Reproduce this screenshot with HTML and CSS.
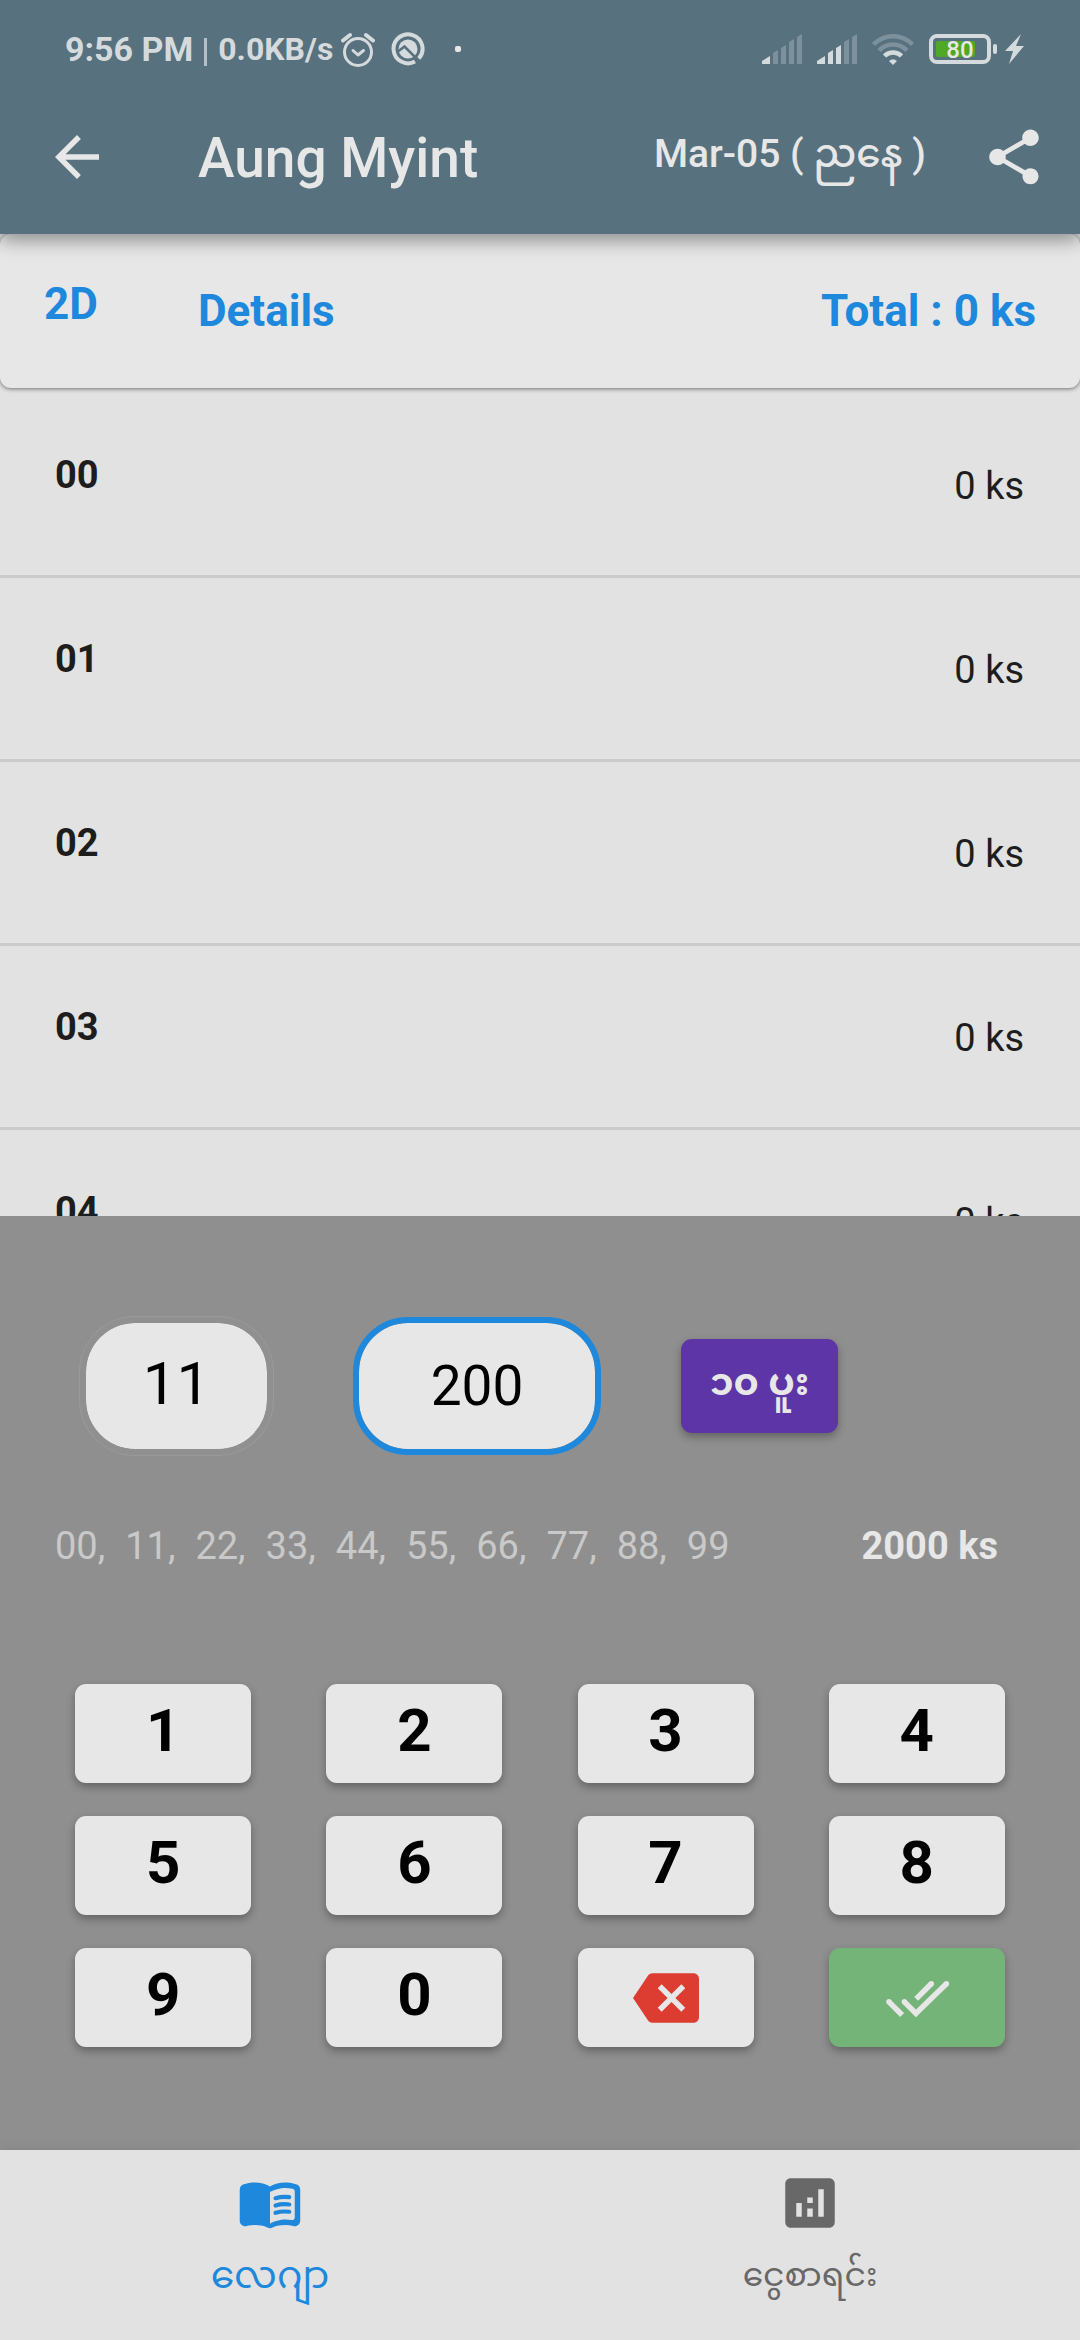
FILE: index.html
```html
<!DOCTYPE html>
<html lang="my">
<head>
  <meta charset="UTF-8">
  <meta name="viewport" content="width=device-width, initial-scale=1">
  <title>Aung Myint</title>
  <link rel="stylesheet" href="styles.css">
</head>
<body>

  <!-- app bar -->
  <header class="app-bar">
    <div class="status-bar">
      <span class="clock">9:56 PM</span>
      <span class="divider"></span>
      <span class="speed">0.0KB/s</span>
      <svg class="alarm" width="34" height="36" viewBox="0 0 34 36" fill="none" stroke="currentColor" stroke-width="3" stroke-linecap="round" stroke-linejoin="round">
        <circle cx="17" cy="21" r="13.500"/>
        <path stroke-width="4" d="M2 9.500L9 4M25 4L32 9.500"/>
        <path d="M12 19.500l5 4.500 5.500-4.500"/>
      </svg>
      <svg class="browser" width="34" height="34" viewBox="0 0 34 34">
        <path d="M24 29.500A14.500 14.500 0 1 1 27.800 26.500" fill="none" stroke="currentColor" stroke-width="4"/>
        <circle cx="17" cy="17" r="9.500" fill="currentColor"/>
        <path d="M7 19.500l6.500-5 13 13" fill="none" stroke="#57717e" stroke-width="2.500"/>
      </svg>
      <span class="dot"></span>

      <div class="status-icons">
        <svg width="40" height="30" viewBox="0 0 40 30" fill="currentColor">
          <path d="M0 30v-3l8-5v8z"/>
          <path opacity=".3" d="M11 30V19l5-3v14zM19 30V14l5-3v19zM27 30V8l5-3v25zM35 30V3l5-3v30z"/>
        </svg>
        <svg width="40" height="30" viewBox="0 0 40 30" fill="currentColor">
          <path d="M0 30v-3l8-5v8zM11 30V19l5-3v14zM19 30V14l5-3v19z"/>
          <path opacity=".3" d="M27 30V8l5-3v25zM35 30V3l5-3v30z"/>
        </svg>
        <svg class="wifi" width="42" height="32" viewBox="0 0 42 32" fill="none" stroke="currentColor" stroke-width="4.500">
          <path opacity=".3" d="M1.500 11.500a27 27 0 0 1 39 0M7 17.500a19.500 19.500 0 0 1 28 0"/>
          <path d="M12.500 23a12 12 0 0 1 17 0"/>
          <path d="M17 28q4-3.500 8 0l-4 4z" fill="currentColor" stroke="none"/>
        </svg>
        <svg class="battery" width="68" height="30" viewBox="0 0 68 30">
          <rect x="2" y="2" width="58" height="26" rx="6" fill="none" stroke="currentColor" stroke-width="4"/>
          <rect x="64" y="10" width="4" height="10" rx="2" fill="currentColor"/>
          <rect x="7" y="7" width="39" height="16" rx="2" fill="#4fa826"/>
          <text x="31" y="24" text-anchor="middle">80</text>
        </svg>
        <svg class="bolt" width="19" height="30" viewBox="0 0 19 30" fill="currentColor"><path d="M16 0L0 17h8L4 30l15-18h-8z"/></svg>
      </div>
    </div>

    <div class="toolbar">
      <button class="icon-button" type="button" aria-label="Back">
        <svg viewBox="0 0 24 24" fill="currentColor"><path d="M20 11H7.830l5.590-5.590L12 4l-8 8 8 8 1.410-1.410L7.830 13H20v-2z"/></svg>
      </button>
      <h1 class="title">Aung Myint</h1>
      <span class="date">Mar-05 ( ညနေ )</span>
      <button class="icon-button" type="button" aria-label="Share">
        <svg viewBox="0 0 24 24" fill="currentColor"><path d="M18 16.080c-.76 0-1.440.3-1.960.77L8.910 12.700c.05-.23.09-.46.09-.7s-.04-.47-.09-.7l7.050-4.110c.54.5 1.250.81 2.040.81 1.660 0 3-1.340 3-3s-1.340-3-3-3-3 1.340-3 3c0 .24.04.47.09.7L8.040 9.810C7.500 9.310 6.790 9 6 9c-1.660 0-3 1.340-3 3s1.340 3 3 3c.79 0 1.500-.31 2.040-.81l7.120 4.160c-.05.21-.08.43-.08.65 0 1.610 1.310 2.920 2.920 2.920s2.920-1.310 2.920-2.920-1.310-2.920-2.920-2.920z"/></svg>
      </button>
    </div>
  </header>

  <main class="content">
    <section class="summary">
      <span class="type">2D</span>
      <span class="details">Details</span>
      <span class="total">Total : 0 ks</span>
    </section>

    <ul class="number-list">
      <li><b>00</b><span>0 ks</span></li>
      <li><b>01</b><span>0 ks</span></li>
      <li><b>02</b><span>0 ks</span></li>
      <li><b>03</b><span>0 ks</span></li>
      <li><b>04</b><span>0 ks</span></li>
    </ul>
  </main>

  <!-- input panel -->
  <section class="panel">
    <div class="fields">
      <input class="field number" type="text" value="11" aria-label="Number">
      <input class="field amount" type="text" value="200" aria-label="Amount">
      <button class="group-button" type="button">၁၀ ပူး</button>
    </div>

    <div class="codes">
      <div class="code-list">
        <span>00,</span>
        <span>11,</span>
        <span>22,</span>
        <span>33,</span>
        <span>44,</span>
        <span>55,</span>
        <span>66,</span>
        <span>77,</span>
        <span>88,</span>
        <span>99</span>
      </div>
      <span class="code-total">2000 ks</span>
    </div>

    <div class="keypad">
      <button class="key" type="button">1</button>
      <button class="key" type="button">2</button>
      <button class="key" type="button">3</button>
      <button class="key" type="button">4</button>
      <button class="key" type="button">5</button>
      <button class="key" type="button">6</button>
      <button class="key" type="button">7</button>
      <button class="key" type="button">8</button>
      <button class="key" type="button">9</button>
      <button class="key" type="button">0</button>
      <button class="key delete" type="button" aria-label="Delete">
        <svg viewBox="0 0 24 24" fill="currentColor"><path d="M22 3H7c-.69 0-1.230.35-1.590.88L0 12l5.410 8.110c.36.53.9.89 1.590.89h15c1.100 0 2-.9 2-2V5c0-1.100-.9-2-2-2zm-3 12.590L17.590 17 14 13.410 10.410 17 9 15.590 12.590 12 9 8.410 10.410 7 14 10.590 17.590 7 19 8.410 15.410 12 19 15.590z"/></svg>
      </button>
      <button class="key done" type="button" aria-label="Done">
        <svg viewBox="0 0 24 24" fill="none" stroke="currentColor" stroke-width="2">
          <path stroke-linecap="round" d="M1.800 13.400l0 0M7.400 13.400l0 0M17.200 6.800l0 0M22.700 6.800l0 0"/>
          <path d="M1.800 13.400l4.800 4.800M17.200 6.800l-5.500 5.500M7.400 13.400l4.200 4.200L22.700 6.800"/>
        </svg>
      </button>
    </div>
  </section>

  <!-- bottom navigation -->
  <nav class="bottom-nav">
    <a class="nav-item active" href="#ledger">
      <svg viewBox="0 0 24 24" fill="currentColor">
        <path fill-rule="evenodd" d="M17.500 4.500c-1.950 0-4.050.4-5.500 1.500-1.450-1.100-3.550-1.500-5.500-1.500-1.450 0-2.990.22-4.280.79C1.490 5.620 1 6.330 1 7.140v11.280c0 1.300 1.220 2.260 2.480 1.940.98-.25 2.020-.36 3.020-.36 1.560 0 3.220.26 4.560.92.6.3 1.280.3 1.870 0 1.340-.67 3-.92 4.560-.92 1 0 2.040.11 3.020.36 1.260.33 2.480-.63 2.480-1.940V7.140c0-.81-.49-1.520-1.220-1.850-1.280-.57-2.820-.79-4.270-.79zM21 17.230c0 .63-.58 1.090-1.200.98-.75-.14-1.530-.2-2.300-.2-1.700 0-4.150.65-5.500 1.500V8c1.350-.85 3.800-1.500 5.500-1.500.92 0 1.830.09 2.700.28.46.1.8.51.8.98v9.470z"/>
        <path fill="none" stroke="currentColor" stroke-width="1.500" stroke-linecap="round" d="M14 10.260q2.400-.7 5-.4M14 12.920q2.400-.7 5-.4M14 15.580q2.400-.7 5-.4"/>
      </svg>
      <span>လေဂျာ</span>
    </a>
    <a class="nav-item" href="#accounts">
      <svg viewBox="0 0 24 24" fill="currentColor"><path d="M19 3H5c-1.100 0-2 .9-2 2v14c0 1.100.9 2 2 2h14c1.100 0 2-.9 2-2V5c0-1.100-.9-2-2-2zM9 17H7v-5h2v5zm4 0h-2v-3h2v3zm0-5h-2v-2h2v2zm4 5h-2V7h2v10z"/></svg>
      <span>ငွေစာရင်း</span>
    </a>
  </nav>

</body>
</html>
```
FILE: styles.css
```css
* {
  box-sizing: border-box;
}

body {
  margin: 0;
  height: 100vh;
  display: flex;
  flex-direction: column;
  font-family: Roboto, "Noto Sans Myanmar", "Noto Sans", sans-serif;
  font-size: 38px;
  line-height: 44px;
  background-color: #e2e2e2;
  color: #1d1d1d;
}

button, input {
  font-family: inherit;
  border: none;
  padding: 0;
  margin: 0;
}

svg {
  display: block;
  flex: none;
}

/* app bar */
.app-bar {
  position: relative; /* keeps the shadow above the card */
  z-index: 1;
  background-color: #57717e;
  color: #e7e7e7;
  box-shadow: 0 6px 18px rgba(0, 0, 0, 0.4);
}

.status-bar {
  display: flex;
  align-items: center;
  height: 80px;
  padding: 18px 56px 0 65px;
  font-size: 32px;
  font-weight: 700;
  color: #d5dadd;
}

.clock {
  font-size: 34px;
}

.divider {
  width: 3px;
  height: 28px;
  margin: 6px 11px 0;
  background-color: #b5c0c6;
}

.alarm {
  margin-left: 8px;
}

.browser {
  margin-left: 16px;
}

.dot {
  width: 6px;
  height: 6px;
  margin-left: 30px;
  border-radius: 2px;
  background-color: #e7e7e7;
}

.status-icons {
  display: flex;
  align-items: center;
  gap: 15px;
  margin-left: auto;
}

.battery text {
  font-size: 24px;
  font-weight: 500;
  fill: #e7e7e7;
}

.bolt {
  margin-left: -7px;
}

.toolbar {
  display: flex;
  align-items: center;
  height: 154px;
  padding: 0 33px 0 44px;
}

.icon-button {
  width: 66px;
  height: 66px;
  background: none;
  color: inherit;
}

.title {
  flex: 1;
  margin: 0 0 0 88px;
  padding-top: 2px;
  font-size: 55px;
  font-weight: 500;
}

.date {
  margin-right: 55px;
  padding-bottom: 6px;
  font-size: 39px;
  font-weight: 500;
}

/* list */
.content {
  flex: 1;
  min-height: 0;
  overflow: hidden;
}

.summary {
  display: flex;
  align-items: center;
  height: 154px;
  padding: 0 44px;
  border-radius: 11px;
  background-color: #e7e7e7;
  box-shadow: 0 1px 4px rgba(0, 0, 0, 0.5);
  color: #1e88dc;
  font-size: 44px;
  font-weight: 700;
}

.type {
  width: 154px;
  padding-bottom: 14px;
}

.total {
  margin-left: auto;
}

.number-list {
  list-style: none;
  margin: 0;
  padding: 6px 0 0;
}

.number-list li {
  display: flex;
  align-items: center;
  justify-content: space-between;
  height: 184px;
  padding: 2px 56px 0 55px;
  border-bottom: 3px solid #cbcbcb;
}

.number-list b {
  padding-bottom: 22px;
}

/* input panel */
.panel {
  padding: 101px 0 103px;
  background-color: #8f8f8f;
}

.fields {
  display: flex;
  align-items: center;
  gap: 80px;
  padding: 0 80px;
}

.field {
  height: 138px;
  border: 6px solid #909090;
  border-radius: 55px;
  background-color: #e7e7e7;
  background-clip: padding-box;
  color: #000;
  text-align: center;
  outline: none;
}

.number {
  width: 193px;
  padding-bottom: 6px;
  box-shadow: 0 0 0 1px #9a9a9a;
  font-size: 60px;
}

.amount {
  width: 248px;
  border-color: #1e88dc;
  font-size: 55px;
}

.group-button {
  width: 157px;
  height: 94px;
  border-radius: 11px;
  background-color: #5d35a6;
  box-shadow: 0 4px 8px rgba(0, 0, 0, 0.3);
  color: #e7e7e7;
  font-size: 38px;
  font-weight: 700;
}

.codes {
  display: flex;
  justify-content: space-between;
  margin-top: 69px;
  padding: 0 82px 0 55px;
}

.code-list {
  display: flex;
  gap: 20px;
  color: #c9c9c9;
}

.code-total {
  color: #e7e7e7;
  font-weight: 700;
}

.keypad {
  display: grid;
  grid-template-columns: repeat(4, 176px);
  justify-content: space-evenly;
  row-gap: 33px;
  margin-top: 116px;
}

.key {
  display: flex;
  align-items: center;
  justify-content: center;
  height: 99px;
  padding-bottom: 6px;
  border-radius: 11px;
  background-color: #e7e7e7;
  box-shadow: 0 4px 8px rgba(0, 0, 0, 0.3);
  color: #000;
  font-size: 60px;
  font-weight: 700;
}

.key svg {
  width: 66px;
  height: 66px;
}

.delete {
  padding: 0;
  color: #dd3d31;
}

.done {
  padding: 0;
  background-color: #75b478;
  color: #e7e7e7;
}

/* bottom navigation */
.bottom-nav {
  display: flex;
  height: 190px;
  background-color: #e2e2e2;
  box-shadow: 0 -1px 12px rgba(0, 0, 0, 0.08);
}

.nav-item {
  flex: 1;
  display: flex;
  flex-direction: column;
  align-items: center;
  padding-top: 20px;
  gap: 17px;
  color: #686868;
  font-size: 33px;
  text-decoration: none;
}

.nav-item svg {
  width: 66px;
  height: 66px;
}

.active {
  color: #1e88dc;
  font-size: 38px;
}
```
